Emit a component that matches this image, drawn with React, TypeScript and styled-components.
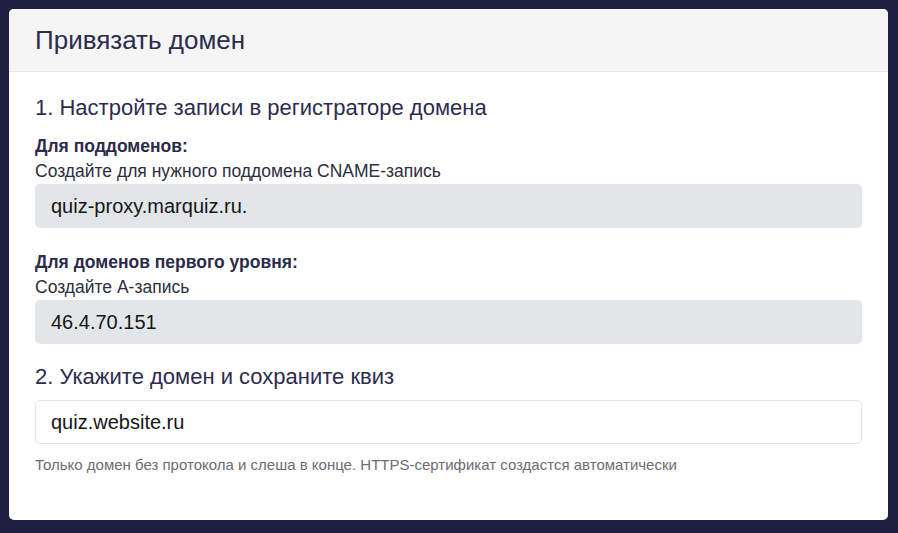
import React from 'react'
import styled, { createGlobalStyle } from 'styled-components'

const GlobalStyle = createGlobalStyle`
    html, body {
        margin: 0;
        padding: 0;
        background: #1f1f3f;
        font-family: "Liberation Sans", Arial, sans-serif;
    }
`

const Page = styled.div`
    padding: 9px 10px 13px 9px;
    min-height: 533px;
    box-sizing: border-box;
`

const Card = styled.div`
    background: #ffffff;
    border-radius: 5px;
    overflow: hidden;
`

const CardHeader = styled.div`
    background: #f5f5f5;
    border-bottom: 1px solid #e8e8e8;
    height: 63px;
    box-sizing: border-box;
    display: flex;
    align-items: center;
    padding: 0 26px;
`

const Title = styled.h2`
    margin: 0;
    font-size: 26px;
    font-weight: 400;
    color: #2c2c4e;
`

const CardBody = styled.div`
    padding: 23px 26px 46px;
    display: flex;
    flex-direction: column;
`

const StepTitle = styled.h3<{ $gap?: number }>`
    margin: 0 0 ${p => p.$gap ?? 15}px;
    font-size: 22px;
    font-weight: 400;
    color: #2c2c4e;
    line-height: 26px;
`

const Label = styled.div`
    font-size: 17.5px;
    font-weight: 700;
    color: #2c2c4a;
    line-height: 20px;
`

const Hint = styled.div`
    font-size: 17.5px;
    color: #2e2e3e;
    line-height: 20px;
    margin: 5px 0 3px;
`

const ReadonlyBox = styled.div<{ $mb?: number }>`
    background: #e3e6e9;
    border-radius: 5px;
    height: 44px;
    display: flex;
    align-items: center;
    padding: 0 16px;
    font-size: 20px;
    color: #161616;
    margin-bottom: ${p => p.$mb ?? 0}px;
`

const Input = styled.input`
    height: 44px;
    box-sizing: border-box;
    border: 1px solid #e2e4e8;
    border-radius: 5px;
    padding: 0 15px;
    font-family: inherit;
    font-size: 20px;
    color: #161616;
    outline: none;
`

const Small = styled.div`
    margin-top: 12px;
    font-size: 15px;
    color: #6c6c74;
    line-height: 18px;
`

export default function App() {
    return (
        <>
            <GlobalStyle />
            <Page>
                <Card>
                    <CardHeader>
                        <Title>Привязать домен</Title>
                    </CardHeader>
                    <CardBody>
                        <StepTitle $gap={15}>1. Настройте записи в регистраторе домена</StepTitle>
                        <Label>Для поддоменов:</Label>
                        <Hint>Создайте для нужного поддомена CNAME-запись</Hint>
                        <ReadonlyBox $mb={24}>quiz-proxy.marquiz.ru.</ReadonlyBox>
                        <Label>Для доменов первого уровня:</Label>
                        <Hint>Создайте А-запись</Hint>
                        <ReadonlyBox $mb={20}>46.4.70.151</ReadonlyBox>
                        <StepTitle $gap={10}>2. Укажите домен и сохраните квиз</StepTitle>
                        <Input defaultValue="quiz.website.ru" />
                        <Small>Только домен без протокола и слеша в конце. HTTPS-сертификат создастся автоматически</Small>
                    </CardBody>
                </Card>
            </Page>
        </>
    )
}
